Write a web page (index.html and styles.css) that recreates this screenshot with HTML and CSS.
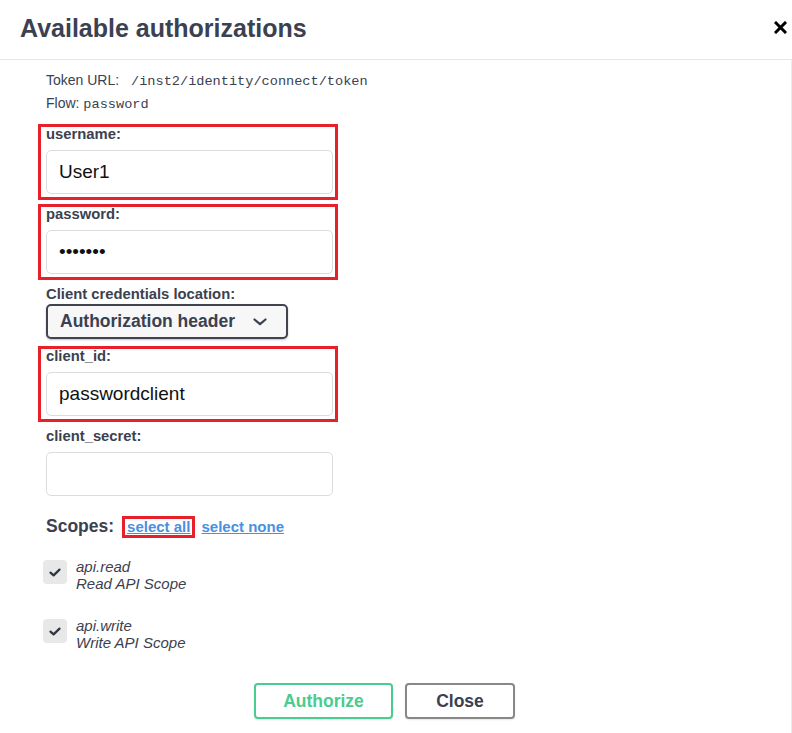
FILE: index.html
```html
<!DOCTYPE html>
<html lang="en">
<head>
<meta charset="utf-8">
<title>Available authorizations</title>
<link rel="stylesheet" href="styles.css">
</head>
<body>
<div class="modal">
  <div class="modal-header">
    <h3 class="modal-title">Available authorizations</h3>
    <button class="close-x" type="button" aria-label="Close">
      <svg width="13" height="13" viewBox="0 0 13 13"><path d="M2 2 L11 11 M11 2 L2 11" stroke="#000" stroke-width="3" stroke-linecap="square" fill="none"/></svg>
    </button>
  </div>
  <div class="modal-body">
    <p class="meta">Token URL: <code class="code code-url">/inst2/identity/connect/token</code></p>
    <p class="meta">Flow: <code class="code">password</code></p>

    <div class="fields">
      <div class="field field-marked">
        <label class="field-label">username:</label>
        <input class="text-input" type="text" value="User1">
      </div>
      <div class="field field-marked">
        <label class="field-label">password:</label>
        <input class="text-input" type="password" value="1234567">
      </div>
      <div class="field field-select">
        <label class="field-label">Client credentials location:</label>
        <div class="select-box">
          <span>Authorization header</span>
          <svg class="chevron" width="14" height="8" viewBox="0 0 14 8"><path d="M1.5 1.5 L7 6.2 L12.5 1.5" stroke="#3b4151" stroke-width="2.2" fill="none" stroke-linecap="round" stroke-linejoin="round"/></svg>
        </div>
      </div>
      <div class="field field-marked">
        <label class="field-label">client_id:</label>
        <input class="text-input" type="text" value="passwordclient">
      </div>
      <div class="field">
        <label class="field-label">client_secret:</label>
        <input class="text-input" type="text" value="">
      </div>
    </div>

    <div class="scopes-head">
      <span class="scopes-title">Scopes:</span>
      <a class="scope-link scope-link-marked" href="#">select all</a>
      <a class="scope-link" href="#">select none</a>
    </div>

    <div class="scope-list">
      <div class="scope-item">
        <span class="checkbox"><svg width="12" height="9" viewBox="0 0 12 9"><path d="M1.5 4.6 L4.6 7.4 L10.5 1.6" stroke="#2f3541" stroke-width="2.2" fill="none" stroke-linecap="round" stroke-linejoin="round"/></svg></span>
        <div class="scope-text">
          <div>api.read</div>
          <div>Read API Scope</div>
        </div>
      </div>
      <div class="scope-item">
        <span class="checkbox"><svg width="12" height="9" viewBox="0 0 12 9"><path d="M1.5 4.6 L4.6 7.4 L10.5 1.6" stroke="#2f3541" stroke-width="2.2" fill="none" stroke-linecap="round" stroke-linejoin="round"/></svg></span>
        <div class="scope-text">
          <div>api.write</div>
          <div>Write API Scope</div>
        </div>
      </div>
    </div>

    <div class="actions">
      <button class="btn btn-authorize" type="button">Authorize</button>
      <button class="btn btn-close" type="button">Close</button>
    </div>
  </div>
</div>
</body>
</html>
```
FILE: styles.css
```css
html, body {
  margin: 0;
  padding: 0;
  background: #fff;
}
body {
  font-family: "Liberation Sans", Arial, sans-serif;
  color: #3b4151;
  overflow: hidden;
}
.modal {
  width: 792px;
  height: 733px;
  display: flex;
  flex-direction: column;
}
.modal-header {
  display: flex;
  align-items: center;
  justify-content: space-between;
  padding: 13px 5px 16px 20px;
  border-bottom: 1px solid #e6e6e6;
}
.modal-title {
  margin: 0;
  font-size: 25px;
  line-height: 30px;
  font-weight: bold;
  color: #3b4151;
}
.close-x {
  border: 0;
  background: none;
  padding: 0;
  width: 13px;
  height: 13px;
  display: flex;
  margin-top: -1px;
}
.modal-body {
  flex: 1;
  box-sizing: border-box;
  border-right: 1px solid #ececec;
  padding: 9px 0 0 38px;
}
.meta {
  margin: 0;
  padding-left: 8px;
  font-size: 14px;
  line-height: 23px;
  height: 23px;
  color: #3b4151;
}
.code {
  font-family: "Liberation Mono", "Courier New", monospace;
  font-size: 13.6px;
  line-height: 1;
  color: #3b4151;
}
.code-url {
  margin-left: 8px;
}
.fields {
  margin-top: 9px;
  display: flex;
  flex-direction: column;
  gap: 4px;
}
.field {
  width: 300px;
  box-sizing: border-box;
  border: 3px solid transparent;
  padding: 0 2px 3px 5px;
}
.field-marked {
  border-color: #e8202a;
}
.field-select {
  padding-bottom: 0;
}
.field-label {
  display: block;
  font-size: 14.8px;
  line-height: 15px;
  height: 15px;
  font-weight: bold;
  color: #3b4151;
}
.text-input {
  display: block;
  margin-top: 8px;
  width: 287px;
  height: 44px;
  box-sizing: border-box;
  border: 1px solid #dcdcdc;
  border-radius: 5px;
  padding: 0 12px;
  font-family: "Liberation Sans", Arial, sans-serif;
  font-size: 19px;
  color: #111;
  background: #fff;
  outline: none;
}
.select-box {
  margin-top: 2px;
  width: 242px;
  height: 35px;
  box-sizing: border-box;
  border: 2px solid #41444e;
  border-radius: 5px;
  background: #f7f7f7;
  box-shadow: 0 1px 2px rgba(0, 0, 0, 0.25);
  display: flex;
  align-items: center;
  justify-content: space-between;
  padding: 0 19px 0 12px;
  font-size: 17.5px;
  font-weight: bold;
  color: #3b4151;
}
.chevron {
  display: block;
  margin-top: 1px;
}
.scopes-head {
  margin-top: 13px;
  padding-left: 8px;
  display: flex;
  align-items: baseline;
}
.scopes-title {
  font-size: 17.5px;
  font-weight: bold;
  line-height: 22px;
  color: #3b4151;
}
.scope-link {
  font-size: 15px;
  font-weight: bold;
  line-height: 16px;
  color: #4990e2;
  text-decoration: underline;
  margin-left: 2px;
  border: 3px solid transparent;
  padding: 0 1px;
}
.scope-link-marked {
  margin-left: 8px;
  padding: 0 2px;
  border-color: #e8202a;
}
.scope-list {
  margin-top: 20px;
  padding-left: 5px;
  display: flex;
  flex-direction: column;
  gap: 25px;
}
.scope-item {
  display: flex;
  align-items: flex-start;
  gap: 9px;
}
.checkbox {
  margin-top: 2px;
  width: 24px;
  height: 24px;
  border-radius: 4px;
  background: #e8e8e8;
  display: flex;
  align-items: center;
  justify-content: center;
  flex: none;
}
.scope-text {
  font-size: 15px;
  font-style: italic;
  line-height: 17px;
  color: #3b4151;
}
.actions {
  margin-top: 32px;
  padding-left: 216px;
  display: flex;
  gap: 12px;
}
.btn {
  height: 36px;
  box-sizing: border-box;
  border-radius: 4px;
  background: #fff;
  font-family: "Liberation Sans", Arial, sans-serif;
  font-size: 17.5px;
  font-weight: bold;
  padding: 0;
  box-shadow: 0 1px 2px rgba(0, 0, 0, 0.1);
}
.btn-authorize {
  width: 139px;
  border: 2px solid #49cc90;
  color: #49cc90;
}
.btn-close {
  width: 110px;
  border: 2px solid #888;
  color: #3b4151;
}
```
